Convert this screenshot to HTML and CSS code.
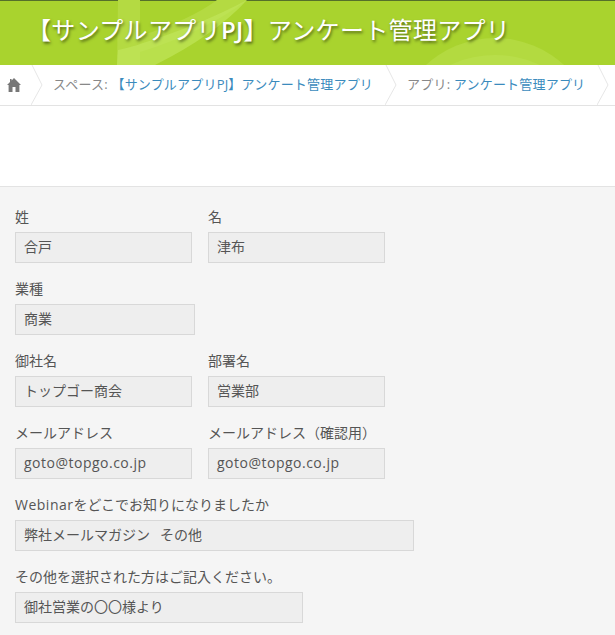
FILE: index.html
```html
<!DOCTYPE html>
<html lang="ja">
<head>
  <meta charset="UTF-8">
  <title>アンケート管理アプリ</title>
  <link rel="stylesheet" href="styles.css">
</head>
<body>
  <div class="header">
    <svg class="header-bg" width="615" height="65" viewBox="0 0 615 65">
      <path d="M118 0 L140 0 L140 65 L117 65 Z" fill="#b4da42"/>
      <path d="M217 0 L247 0 Q205 32 140 52 L140 36 Q190 20 217 0 Z" fill="#b4da42"/>
      <path d="M117 65 L118 50 Q135 46 140 44 Q200 25 247 0 Q215 35 155 65 Z" fill="#c2e65c" opacity="0.65"/>
      <circle cx="495" cy="140" r="102" fill="#b3da40"/>
      <circle cx="495" cy="160" r="105" fill="#b8de4a"/>
    </svg>
    <h1 class="app-title">【サンプルアプリ<b>PJ</b>】アンケート管理アプリ</h1>
  </div>

  <div class="breadcrumb">
    <div class="crumb-home">
      <svg width="14" height="14" viewBox="0 0 14 14">
        <path d="M7 0 L14 7 L12.4 7 L12.4 14 L8.5 14 L8.5 9 L5.5 9 L5.5 14 L1.6 14 L1.6 7 L0 7 L3 4 L3 1 L4.6 1 L4.6 2.4 Z" fill="#777"/>
      </svg>
    </div>
    <svg class="sep" width="12" height="40" viewBox="0 0 12 40"><path d="M1 0 L11 20 L0 40" fill="none" stroke="#e6e6e6"/></svg>
    <div class="crumb">スペース:&nbsp;<a href="#">【サンプルアプリPJ】アンケート管理アプリ</a></div>
    <svg class="sep" width="12" height="40" viewBox="0 0 12 40"><path d="M1 0 L11 20 L0 40" fill="none" stroke="#e6e6e6"/></svg>
    <div class="crumb">アプリ: <a href="#">アンケート管理アプリ</a></div>
    <svg class="sep" width="12" height="40" viewBox="0 0 12 40"><path d="M1 0 L11 20 L0 40" fill="none" stroke="#e6e6e6"/></svg>
  </div>

  <div class="toolbar"></div>

  <div class="form">
    <div class="row">
      <div class="field w177">
        <div class="label">姓</div>
        <div class="value">合戸</div>
      </div>
      <div class="field w177">
        <div class="label">名</div>
        <div class="value">津布</div>
      </div>
    </div>
    <div class="row">
      <div class="field w180">
        <div class="label">業種</div>
        <div class="value">商業</div>
      </div>
    </div>
    <div class="row">
      <div class="field w177">
        <div class="label">御社名</div>
        <div class="value">トップゴー商会</div>
      </div>
      <div class="field w177">
        <div class="label">部署名</div>
        <div class="value">営業部</div>
      </div>
    </div>
    <div class="row">
      <div class="field w177">
        <div class="label">メールアドレス</div>
        <div class="value latin">goto@topgo.co.jp</div>
      </div>
      <div class="field w177">
        <div class="label">メールアドレス（確認用）</div>
        <div class="value latin">goto@topgo.co.jp</div>
      </div>
    </div>
    <div class="row">
      <div class="field w399">
        <div class="label"><span class="latin">Webinar</span>をどこでお知りになりましたか</div>
        <div class="value">弊社メールマガジン<span class="choice">その他</span></div>
      </div>
    </div>
    <div class="row">
      <div class="field w288">
        <div class="label">その他を選択された方はご記入ください。</div>
        <div class="value">御社営業の〇〇様より</div>
      </div>
    </div>
  </div>
</body>
</html>
```

FILE: styles.css
```css
*{
  margin: 0;
  padding: 0;
  box-sizing: border-box;
}
html, body{
  height: 100%;
  overflow: hidden;
}
body{
  background-color: #f5f5f5;
  font-family: "Open Sans", "Noto Sans CJK JP", sans-serif;
  font-size: 14px;
  color: #555;
}

.header{
  position: relative;
  height: 65px;
  border-top: 1px solid #55702a;
  background-color: #a9d32e;
  padding: 12px 0 0 27px;
}
.header-bg{
  position: absolute;
  left: 0;
  top: -1px;
}
.app-title{
  position: relative;
  font-size: 24px;
  font-weight: normal;
  line-height: 34px;
  letter-spacing: 0.33px;
  color: #fff;
  white-space: nowrap;
  text-shadow: 1px 2px 3px rgba(0,0,0,0.5);
}
.app-title b{
  font-weight: 600;
}

.breadcrumb{
  display: flex;
  align-items: center;
  height: 41px;
  background-color: #fff;
  border-bottom: 1px solid #e3e3e3;
  overflow: hidden;
}
.crumb{
  font-size: 13px;
  letter-spacing: 0.2px;
  color: #888;
  white-space: nowrap;
  padding: 0 12px 3px 10px;
}
.crumb a{
  color: #3b8bbd;
  text-decoration: none;
}
.crumb-home{
  display: flex;
  padding-left: 7px;
  width: 31px;
}
.sep{
  flex-shrink: 0;
}

.toolbar{
  height: 81px;
  background-color: #fff;
  border-bottom: 1px solid #e3e3e3;
}

.form{
  padding: 19px 0 0 15px;
}
.row{
  display: flex;
  gap: 16px;
  margin-bottom: 15px;
}
.label{
  height: 26px;
  line-height: 22px;
  white-space: nowrap;
}
.value{
  height: 31px;
  line-height: 27px;
  padding-left: 8px;
  background-color: #eee;
  border: 1px solid #d8d8d8;
  white-space: nowrap;
}
.choice{
  margin-left: 10px;
}
.latin{
  letter-spacing: 0.5px;
}
.w177{ width: 177px; }
.w180{ width: 180px; }
.w399{ width: 399px; }
.w288{ width: 288px; }
```
